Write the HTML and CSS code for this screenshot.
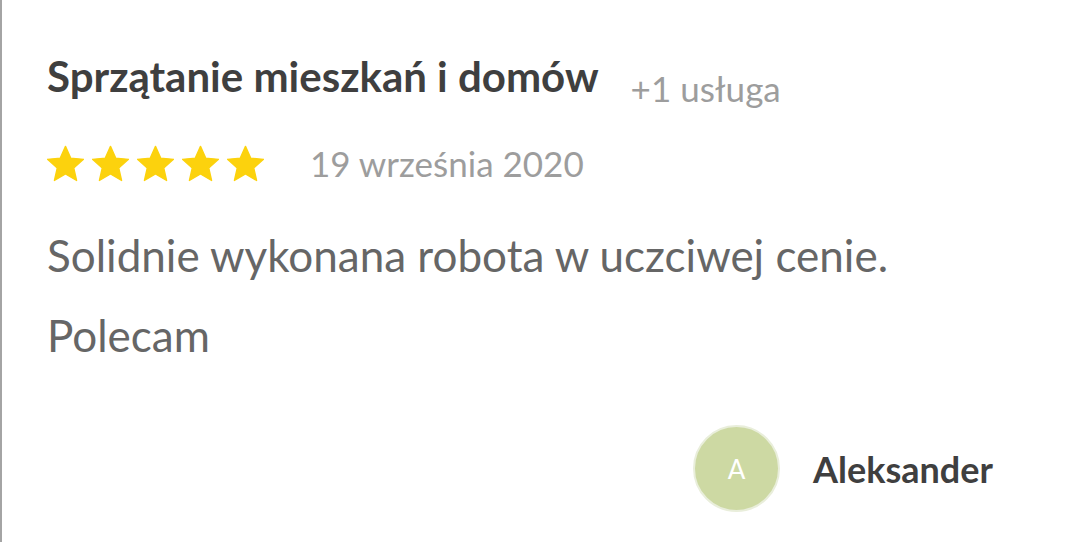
FILE: index.html
```html
<!DOCTYPE html>
<html lang="pl">
<head>
<meta charset="utf-8">
<link rel="stylesheet" href="styles.css">
</head>
<body>
<div class="card">
  <div class="title-row">
    <h1 class="title">Sprzątanie mieszkań i domów</h1>
    <span class="extra">+1 usługa</span>
  </div>
  <div class="rating-row">
    <div class="stars">
      <svg class="star" viewBox="1 1 22 22"><path d="M12 1.8l3.1 7 7.6.7-5.8 5.1 1.7 7.5L12 18.2l-6.6 3.9 1.7-7.5-5.8-5.1 7.6-.7z"/></svg>
      <svg class="star" viewBox="1 1 22 22"><path d="M12 1.8l3.1 7 7.6.7-5.8 5.1 1.7 7.5L12 18.2l-6.6 3.9 1.7-7.5-5.8-5.1 7.6-.7z"/></svg>
      <svg class="star" viewBox="1 1 22 22"><path d="M12 1.8l3.1 7 7.6.7-5.8 5.1 1.7 7.5L12 18.2l-6.6 3.9 1.7-7.5-5.8-5.1 7.6-.7z"/></svg>
      <svg class="star" viewBox="1 1 22 22"><path d="M12 1.8l3.1 7 7.6.7-5.8 5.1 1.7 7.5L12 18.2l-6.6 3.9 1.7-7.5-5.8-5.1 7.6-.7z"/></svg>
      <svg class="star" viewBox="1 1 22 22"><path d="M12 1.8l3.1 7 7.6.7-5.8 5.1 1.7 7.5L12 18.2l-6.6 3.9 1.7-7.5-5.8-5.1 7.6-.7z"/></svg>
    </div>
    <span class="date">19 września 2020</span>
  </div>
  <p class="text">Solidnie wykonana robota w uczciwej cenie.</p>
  <p class="text">Polecam</p>
  <div class="author">
    <div class="avatar">A</div>
    <span class="name">Aleksander</span>
  </div>
</div>
</body>
</html>
```
FILE: styles.css
```css
html, body {
  margin: 0;
  padding: 0;
  background: #fff;
}
body {
  width: 1080px;
  height: 542px;
  overflow: hidden;
  font-family: Lato, "Open Sans", sans-serif;
}
.card {
  box-sizing: border-box;
  height: 542px;
  border-left: 2px solid #a4a4a4;
  padding: 51px 0 0 45px;
}
.title-row {
  display: flex;
  align-items: flex-start;
  gap: 32px;
}
.title {
  margin: 0;
  font-size: 42px;
  font-weight: 700;
  color: #3f3f3f;
  line-height: 50px;
}
.extra {
  font-size: 35px;
  line-height: 40px;
  padding-top: 17px;
  color: #9d9d9d;
}
.rating-row {
  display: flex;
  align-items: center;
  gap: 46px;
  height: 40px;
  margin-top: 35px;
}
.stars {
  display: flex;
  gap: 8px;
}
.star {
  width: 37px;
  height: 37px;
  fill: #fcd20d;
  stroke: #fcd20d;
  stroke-width: 0.8;
  stroke-linejoin: round;
}
.date {
  font-size: 35px;
  line-height: 40px;
  color: #9d9d9d;
}
.text {
  margin: 0;
  font-size: 44px;
  color: #666666;
  line-height: 80px;
}
.rating-row + .text {
  margin-top: 32px;
}
.author {
  display: flex;
  align-items: center;
  gap: 33px;
  margin: 50px 0 0 646px;
}
.avatar {
  box-sizing: border-box;
  width: 87px;
  height: 87px;
  border-radius: 50%;
  background: #cdd9a3;
  border: 2px solid #e9eedb;
  color: #fff;
  font-size: 26px;
  display: flex;
  align-items: center;
  justify-content: center;
}
.name {
  font-size: 36px;
  font-weight: 700;
  color: #3f3f3f;
}
```
